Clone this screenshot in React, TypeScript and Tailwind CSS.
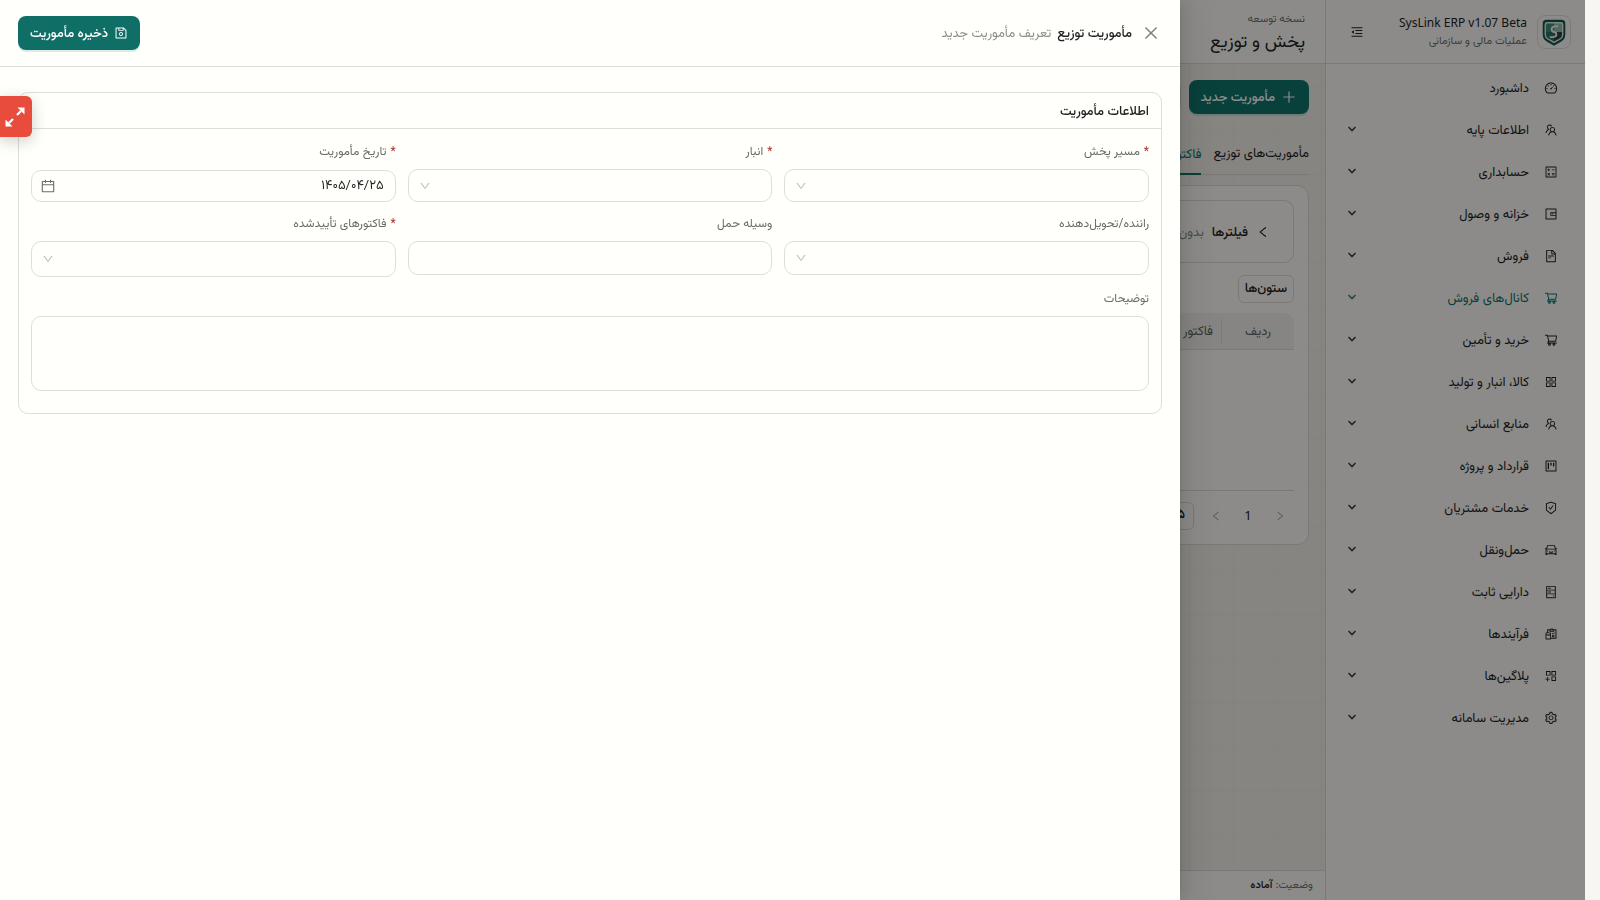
import type { ComponentType, ReactNode } from "react";
import {
  AiOutlineAppstore,
  AiOutlineAppstoreAdd,
  AiOutlineCalculator,
  AiOutlineCalendar,
  AiOutlineCar,
  AiOutlineClose,
  AiOutlineDashboard,
  AiOutlineDown,
  AiOutlineFileText,
  AiOutlineHdd,
  AiOutlineLeft,
  AiOutlineMenuFold,
  AiOutlinePlus,
  AiOutlineProject,
  AiOutlineReconciliation,
  AiOutlineReload,
  AiOutlineRight,
  AiOutlineSafetyCertificate,
  AiOutlineSave,
  AiOutlineSetting,
  AiOutlineShoppingCart,
  AiOutlineTeam,
  AiOutlineWallet,
} from "react-icons/ai";

type MenuItem = {
  label: string;
  icon: ComponentType<{ className?: string }>;
  active?: boolean;
  leaf?: boolean;
};

const MENU: MenuItem[] = [
  { label: "داشبورد", icon: AiOutlineDashboard, leaf: true },
  { label: "اطلاعات پایه", icon: AiOutlineTeam },
  { label: "حسابداری", icon: AiOutlineCalculator },
  { label: "خزانه و وصول", icon: AiOutlineWallet },
  { label: "فروش", icon: AiOutlineFileText },
  { label: "کانال‌های فروش", icon: AiOutlineShoppingCart, active: true },
  { label: "خرید و تأمین", icon: AiOutlineShoppingCart },
  { label: "کالا، انبار و تولید", icon: AiOutlineAppstore },
  { label: "منابع انسانی", icon: AiOutlineTeam },
  { label: "قرارداد و پروژه", icon: AiOutlineProject },
  { label: "خدمات مشتریان", icon: AiOutlineSafetyCertificate },
  { label: "حمل‌ونقل", icon: AiOutlineCar },
  { label: "دارایی ثابت", icon: AiOutlineHdd },
  { label: "فرآیندها", icon: AiOutlineReconciliation },
  { label: "پلاگین‌ها", icon: AiOutlineAppstoreAdd },
  { label: "مدیریت سامانه", icon: AiOutlineSetting },
];

const CONTROL =
  "w-full appearance-none rounded-[10px] border border-[#dfded9] bg-[#fffffb] px-[11px] text-[13px] text-[#1f2423] outline-none focus:border-[#0f766e]";

function Logo() {
  return (
    <svg viewBox="0 0 34 34" className="size-8" aria-hidden="true">
      <path d="M9 4h16q4 0 4 4v11q0 6-5 8.500l-7 4-7-4q-5-2.500-5-8.500V8q0-4 4-4z" fill="#12594f" />
      <path d="M9.500 6.500h15q2.500 0 2.500 2.500v10q0 4.500-4 6.500l-6 3.500-6-3.500q-4-2-4-6.500V9q0-2.500 2.500-2.500z" fill="#e3eee8" />
      <path d="M10 8h7v9H8.500V9.500Q8.500 8 10 8z" fill="#3f8f78" />
      <path d="M17 8h7q1.500 0 1.500 1.500V17H17z" fill="#93c4ac" />
      <path d="M17 17h8.500v2q0 4-3.500 5.500L17 27z" fill="#2e4245" />
      <path d="M8.500 17H17v10l-5-2.500Q8.500 23 8.500 19z" fill="#277462" />
      <path d="M21.500 11h-3.500q-3.500 0-3.500 2.800t2.500 3.200 2.500 2.700-3.500 2.800h-3.500" fill="none" stroke="#f7fbf7" strokeWidth="2" />
    </svg>
  );
}

function Sidebar() {
  return (
    <aside className="w-[260px] shrink-0 border-l border-[#dfdcd5] bg-[#fffefb]">
      <div className="flex h-16 items-center border-b border-[#dfdcd5] pl-[15px] pr-3.5">
        <div className="flex size-[34px] items-center justify-center rounded-lg border border-[#e6e2d9]">
          <Logo />
        </div>
        <div className="mr-2.5 flex-1">
          <div dir="ltr" className="text-right font-['Noto_Sans',sans-serif] text-xs leading-5 text-[#1f2423]">
            SysLink ERP v1.07 Beta
          </div>
          <div className="text-[11px] leading-[18px] text-[#6f7572]">عملیات مالی و سازمانی</div>
        </div>
        <button type="button" aria-label="جمع کردن منو" className="flex size-8 items-center justify-center text-sm text-[#1f2423]">
          <AiOutlineMenuFold />
        </button>
      </div>
      <nav className="flex flex-col gap-1 pt-[5px]">
        {MENU.map((item) => (
          <a
            key={item.label}
            href="#"
            className={`flex h-[38px] items-center pl-[21px] pr-[27px] text-[13px] ${
              item.active ? "text-[#0f766e]" : "text-[#1f2423]"
            }`}
          >
            <item.icon className="size-3.5" />
            <span className="mr-[15px] flex-1 pt-1">{item.label}</span>
            {item.leaf ? null : (
              <svg viewBox="0 0 10 10" className="mb-0.5 size-2.5 opacity-85" fill="none" stroke="currentColor" strokeWidth="1.600">
                <path d="M1.500 3 5 6.500 8.500 3" />
              </svg>
            )}
          </a>
        ))}
      </nav>
    </aside>
  );
}

function MissionsPage() {
  return (
    <div className="flex min-w-0 flex-1 flex-col">
      <header className="flex h-16 flex-col justify-center border-b border-[#dfdcd5] bg-[#fffefb] px-5 pt-1">
        <span className="text-[11px] leading-[18px] text-[#6f7572]">نسخه توسعه</span>
        <h1 className="text-lg leading-7 text-[#1f2423]">پخش و توزیع</h1>
      </header>

      <main className="flex-1 bg-[#f5f3ed] bg-[linear-gradient(rgba(15,80,60,0.03)_1px,transparent_1px),linear-gradient(90deg,rgba(15,80,60,0.03)_1px,transparent_1px)] bg-[size:44px_44px] bg-[position:1px_23px] px-4 pt-4">
        <div className="flex gap-2">
          <button
            type="button"
            className="flex h-[34px] items-center gap-1.5 rounded-lg bg-[#0f766e] px-3 text-[13px] font-medium text-white shadow-[0_2px_0_rgba(15,118,110,0.15)]"
          >
            <AiOutlinePlus className="size-4" />
            <span className="pt-1">مأموریت جدید</span>
          </button>
          <button
            type="button"
            aria-label="بازخوانی"
            className="flex h-[34px] w-9 items-center justify-center rounded-lg border border-[#dfdcd5]"
          >
            <AiOutlineReload className="size-3.5" />
          </button>
        </div>

        <div className="mt-[18px] flex h-[43px] gap-3 border-b border-[#dfdcd5] text-[13px]">
          <button type="button" className="pt-1 text-[#1f2423]">
            مأموریت‌های توزیع
          </button>
          <button type="button" className="-mb-px border-b-2 border-[#0f766e] pt-1.5 text-[#0f766e]">
            فاکتورها
          </button>
        </div>

        <section className="mt-2.5 rounded-xl border border-[#dfdcd5] bg-[#fffefb] px-3.5 pb-3.5 pt-3.5">
          <div className="flex h-[63px] items-center rounded-[10px] border border-[#dfdcd5] px-[23px] text-[13px]">
            <AiOutlineLeft className="size-3.5 text-[#1f2423]" />
            <span className="mr-2 pt-1 font-medium text-[#1f2423]">فیلترها</span>
            <span className="mr-2 pt-1 text-[#8b8f8c]">بدون</span>
          </div>
          <button
            type="button"
            className="mt-3 h-7 rounded-md border border-[#dfdcd5] px-1.5 pt-0.5 text-[13px] font-medium text-[#1f2423]"
          >
            ستون‌ها
          </button>
          <div className="mt-2.5 h-[178px] border-b border-[#dfdcd5]">
            <table className="w-full text-[13px] text-[#5d6763]">
              <thead>
                <tr className="h-9 border-b border-[#dfdcd5] bg-[#f5f3ee]">
                  <th className="w-[72px] rounded-tr-[10px] pt-1 font-normal">ردیف</th>
                  <th className="px-0 text-right font-normal">
                    <span className="block border-r border-[#dfdcd5] pr-2 pt-1">فاکتور</span>
                  </th>
                </tr>
              </thead>
            </table>
          </div>
          <div className="mt-[11px] flex h-7 items-center text-[13px] text-[#1f2423]">
            <button type="button" aria-label="قبلی" className="flex w-7 justify-center text-[#a5a8a5]">
              <AiOutlineRight className="size-3" />
            </button>
            <span className="mx-1 w-7 text-center font-['Noto_Sans',sans-serif]">1</span>
            <button type="button" aria-label="بعدی" className="flex w-7 justify-center text-[#a5a8a5]">
              <AiOutlineLeft className="size-3" />
            </button>
            <select aria-label="تعداد در صفحه" className="mr-2 h-7 w-10 appearance-none rounded-md border border-[#dfdcd5] px-2 font-medium">
              <option>۲۵</option>
            </select>
          </div>
        </section>
      </main>

      <footer className="h-[30px] border-t border-[#dfdcd5] bg-[#fffefb] px-3 text-[11px] leading-[30px] text-[#6f7572]">
        وضعیت: <strong className="font-medium text-[#1f2423]">آماده</strong>
      </footer>
    </div>
  );
}

function Field({ id, label, required, children }: { id: string; label: string; required?: boolean; children: ReactNode }) {
  return (
    <div className="flex flex-col">
      <label htmlFor={id} className="mb-2 flex h-5 items-center gap-1 pt-0.5 text-xs text-[#666c69]">
        {required ? <span className="text-[#a8322d]">*</span> : null}
        {label}
      </label>
      {children}
    </div>
  );
}

function SelectBox({ id, height }: { id: string; height: string }) {
  return (
    <div className="relative">
      <select id={id} className={`${CONTROL} ${height} block`} />
      <AiOutlineDown className="pointer-events-none absolute left-[11px] top-1/2 size-3 -translate-y-1/2 text-[#b9bab6]" />
    </div>
  );
}

function MissionDrawer() {
  return (
    <div
      role="dialog"
      aria-label="مأموریت توزیع"
      className="fixed inset-y-0 left-0 w-[1180px] max-w-full bg-[#fffffb] shadow-[6px_0_16px_rgba(0,0,0,0.08),3px_0_6px_-4px_rgba(0,0,0,0.12),9px_0_28px_8px_rgba(0,0,0,0.05)]"
    >
      <header className="flex h-[67px] items-center border-b border-[#dfded9] pl-[18px] pr-5">
        <button type="button" aria-label="بستن" className="text-[#7d807d]">
          <AiOutlineClose className="size-[18px]" />
        </button>
        <h2 className="mr-2.5 pt-1 text-[13px] font-medium text-[#1f2423]">مأموریت توزیع</h2>
        <span className="mr-1.5 flex-1 pt-1 text-[13px] text-[#8b8f8c]">تعریف مأموریت جدید</span>
        <button
          type="button"
          className="flex h-[34px] items-center gap-1.5 rounded-lg bg-[#0f6e66] px-3 text-[13px] font-medium text-white shadow-[0_2px_0_rgba(15,118,110,0.15)]"
        >
          <AiOutlineSave className="size-3.5" />
          <span className="pt-1">ذخیره مأموریت</span>
        </button>
      </header>

      <form className="px-[18px] pt-[25px]">
        <section className="rounded-[10px] border border-[#dfded9]">
          <h3 className="flex h-9 items-center border-b border-[#dfded9] px-3 pt-1 text-[13px] font-medium text-[#1f2423]">
            اطلاعات مأموریت
          </h3>
          <div className="grid grid-cols-3 gap-x-3 gap-y-[11px] px-3 pb-[22px] pt-3">
            <Field id="route" label="مسیر پخش" required>
              <SelectBox id="route" height="h-[33px]" />
            </Field>
            <Field id="warehouse" label="انبار" required>
              <SelectBox id="warehouse" height="h-[33px]" />
            </Field>
            <Field id="date" label="تاریخ مأموریت" required>
              <div className="relative mt-auto">
                <input id="date" defaultValue="۱۴۰۵/۰۴/۲۵" className={`${CONTROL} block h-8`} />
                <AiOutlineCalendar className="pointer-events-none absolute left-[9px] top-1/2 size-4 -translate-y-1/2 text-[#6b6f6c]" />
              </div>
            </Field>
            <Field id="driver" label="راننده/تحویل‌دهنده">
              <SelectBox id="driver" height="h-[34px]" />
            </Field>
            <Field id="vehicle" label="وسیله حمل">
              <input id="vehicle" className={`${CONTROL} h-[34px]`} />
            </Field>
            <Field id="invoices" label="فاکتورهای تأییدشده" required>
              <SelectBox id="invoices" height="h-9" />
            </Field>
            <div className="col-span-3">
              <Field id="notes" label="توضیحات">
                <textarea id="notes" className={`${CONTROL} h-[75px] resize-none`} />
              </Field>
            </div>
          </div>
        </section>
      </form>
    </div>
  );
}

export default function App() {
  return (
    <div dir="rtl" className="min-h-screen bg-[#f8f6f2] pr-[15px] font-[Vazirmatn,'Noto_Sans',sans-serif]">
      <div className="relative flex min-h-screen overflow-hidden">
        <Sidebar />
        <MissionsPage />
        <div className="absolute inset-0 bg-black/45" />
      </div>
      <MissionDrawer />
      <button
        type="button"
        aria-label="تمام صفحه"
        className="fixed left-0 top-24 flex h-[41px] w-8 items-center justify-center rounded-r-md bg-[#e74c3c] pr-0.5 text-white shadow-[0_4px_16px_rgba(0,0,0,0.2)]"
      >
        <svg viewBox="0 0 20 20" className="size-5" fill="currentColor" stroke="currentColor">
          <path d="M12.500 0.500h7v7z" stroke="none" />
          <path d="M0.500 12.500v7h7z" stroke="none" />
          <path d="M12 8l4-4M8 12l-4 4" strokeWidth="2.200" />
        </svg>
      </button>
    </div>
  );
}
